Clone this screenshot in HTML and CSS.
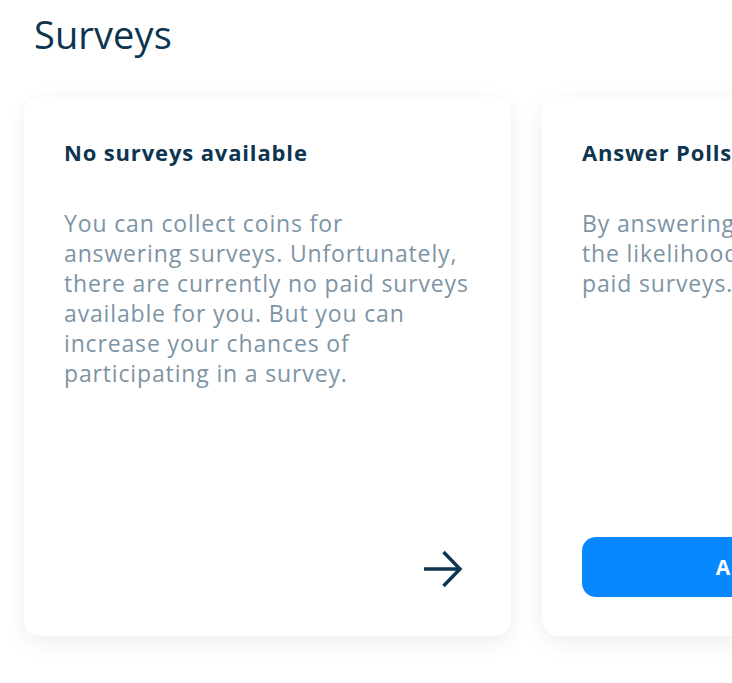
FILE: index.html
```html
<!DOCTYPE html>
<html>
<head>
<meta charset="utf-8">
<link rel="stylesheet" href="styles.css">
</head>
<body>
<main class="page">
  <h1 class="title">Surveys</h1>
  <div class="cards">
    <section class="card">
      <h2 class="card-title">No surveys available</h2>
      <p class="card-text">You can collect coins for<br>answering surveys. Unfortunately,<br>there are currently no paid surveys<br>available for you. But you can<br>increase your chances of<br>participating in a survey.</p>
      <div class="card-footer end">
        <svg class="arrow" width="40" height="38" viewBox="0 0 40 38" fill="none" stroke="#0d3550" stroke-width="3.4">
          <path d="M1 19H37"/>
          <path d="M20.5 2L37 19L20.5 36"/>
        </svg>
      </div>
    </section>
    <section class="card">
      <h2 class="card-title">Answer Polls</h2>
      <p class="card-text">By answering polls, you increase<br>the likelihood of receiving<br>paid surveys.</p>
      <div class="card-footer">
        <button class="btn">Answer polls</button>
      </div>
    </section>
  </div>
</main>
</body>
</html>
```
FILE: styles.css
```css
html, body {
  margin: 0;
  padding: 0;
  background: #ffffff;
  overflow: hidden;
}
body {
  width: 732px;
  height: 683px;
  font-family: "Open Sans", "Noto Sans", sans-serif;
}
.page {
  padding: 10px 0 0 24px;
}
.title {
  margin: 0 0 0 10px;
  font-size: 38px;
  line-height: 48px;
  font-weight: 500;
  letter-spacing: 0.1px;
  color: #0d3550;
}
.cards {
  display: flex;
  gap: 31px;
  margin-top: 39px;
}
.card {
  flex: 0 0 487px;
  height: 539px;
  box-sizing: border-box;
  background: #fff;
  border-radius: 16px;
  box-shadow: 0 6px 22px rgba(0, 0, 0, 0.07);
  padding: 40px 40px 39px;
  display: flex;
  flex-direction: column;
}
.card-title {
  margin: 0;
  font-size: 22px;
  line-height: 30px;
  font-weight: 700;
  letter-spacing: 0.85px;
  color: #0d3550;
  white-space: nowrap;
}
.card-text {
  margin: 41px 0 0;
  font-size: 23px;
  line-height: 30px;
  letter-spacing: 0.85px;
  color: #7d94a5;
  white-space: nowrap;
}
.card-footer {
  margin-top: auto;
  height: 60px;
  display: flex;
  align-items: center;
}
.card-footer.end {
  justify-content: flex-end;
}
.arrow {
  display: block;
  margin: 3px 8px 0 0;
}
.btn {
  width: 100%;
  height: 60px;
  border: none;
  border-radius: 14px;
  background: #0788ff;
  color: #fff;
  font-family: inherit;
  font-size: 21px;
  font-weight: 700;
  letter-spacing: 0.5px;
}
```
